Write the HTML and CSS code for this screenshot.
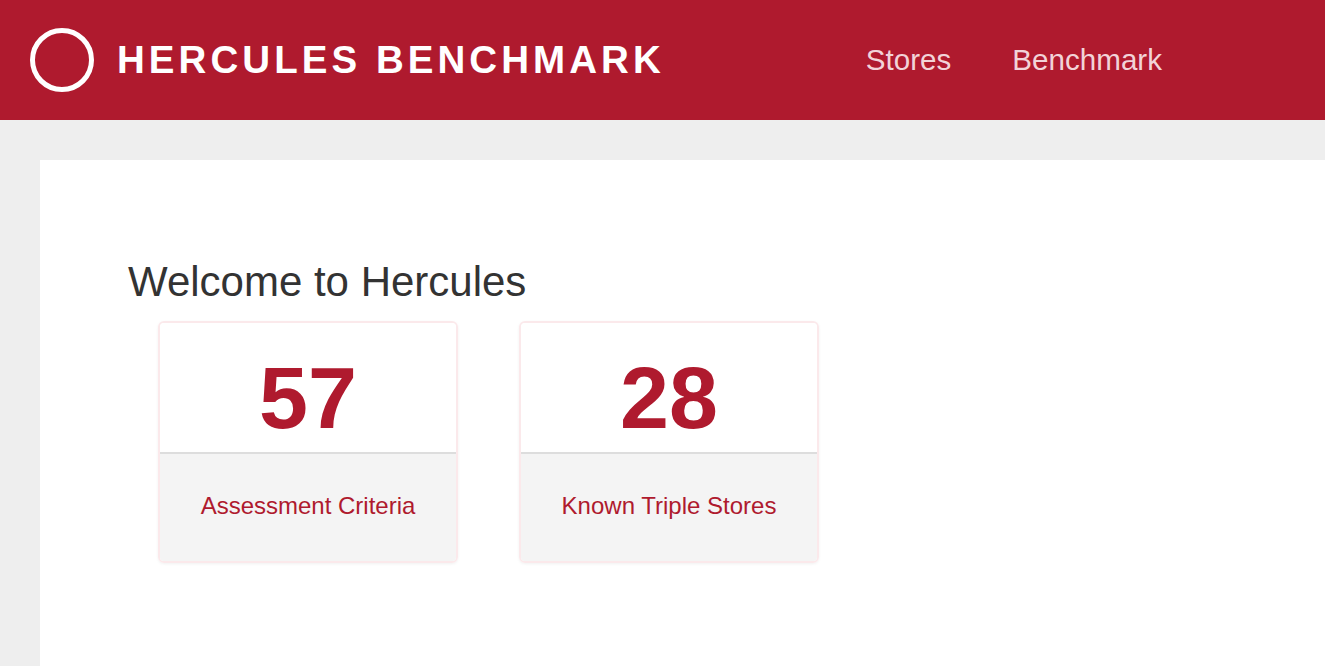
FILE: index.html
```html
<!DOCTYPE html>
<html lang="en">
<head>
<meta charset="utf-8">
<title>Hercules Benchmark</title>
<link rel="stylesheet" href="styles.css">
</head>
<body>
<header class="topbar">
  <div class="brand">
    <svg class="logo" width="64" height="64" viewBox="0 0 64 64" aria-hidden="true">
      <circle cx="32" cy="32" r="29.5" fill="none" stroke="#ffffff" stroke-width="5"/>
    </svg>
    <span class="brand-name">HERCULES BENCHMARK</span>
  </div>
  <nav class="nav">
    <a class="nav-link" href="#">Stores</a>
    <a class="nav-link" href="#">Benchmark</a>
  </nav>
</header>
<main class="page">
  <section class="panel">
    <h1 class="welcome">Welcome to Hercules</h1>
    <div class="cards">
      <div class="card">
        <div class="card-top"><span class="count">57</span></div>
        <div class="card-bottom"><span class="label">Assessment Criteria</span></div>
      </div>
      <div class="card">
        <div class="card-top"><span class="count">28</span></div>
        <div class="card-bottom"><span class="label">Known Triple Stores</span></div>
      </div>
    </div>
  </section>
</main>
</body>
</html>
```
FILE: styles.css
```css
html, body {
  margin: 0;
  padding: 0;
}
body {
  font-family: "Liberation Sans", Arial, sans-serif;
  background: #eeeeee;
  color: #333333;
  overflow: hidden;
}
.topbar {
  height: 120px;
  background: #af1a2e;
  display: flex;
  align-items: center;
  padding-left: 30px;
}
.brand {
  display: flex;
  align-items: center;
  gap: 23px;
}
.logo {
  display: block;
}
.brand-name {
  color: #ffffff;
  font-weight: bold;
  font-size: 38.5px;
  letter-spacing: 4.05px;
  line-height: 1;
}
.nav {
  margin-left: auto;
  margin-right: 163px;
  display: flex;
  gap: 61px;
}
.nav-link {
  color: #f2d3d8;
  text-decoration: none;
  font-size: 29.6px;
  line-height: 1;
}
.page {
  padding: 40px 0 0 40px;
  height: 506px;
}
.panel {
  background: #ffffff;
  height: 100%;
  padding: 99px 0 0 88px;
  box-sizing: border-box;
}
.welcome {
  margin: 0;
  font-weight: normal;
  font-size: 42px;
  line-height: 46px;
  color: #333333;
}
.cards {
  display: flex;
  margin-top: 16px;
}
.card {
  width: 296px;
  margin: 0 31px 0 30px;
  border: 2px solid #fbe9eb;
  border-radius: 6px;
  overflow: hidden;
  box-shadow: 0 1px 3px rgba(0, 0, 0, 0.06);
}
.card-top {
  height: 129px;
  background: #ffffff;
  border-bottom: 2px solid #dddddd;
  display: flex;
  align-items: center;
  justify-content: center;
}
.count {
  color: #af1a2e;
  font-weight: bold;
  font-size: 88px;
  line-height: 1;
  padding-top: 20px;
}
.card-bottom {
  height: 107px;
  background: #f4f4f4;
  display: flex;
  align-items: center;
  justify-content: center;
}
.label {
  color: #af1a2e;
  font-size: 24px;
  line-height: 1;
  padding-bottom: 4px;
}
```
